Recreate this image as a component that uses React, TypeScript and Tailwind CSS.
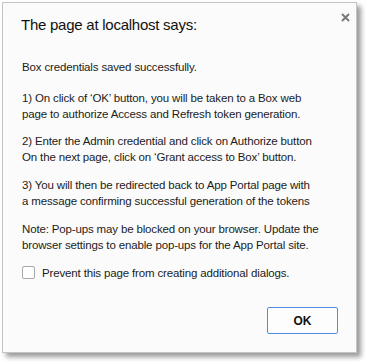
export default function App() {
  const body = "text-[11.5px] leading-[16.5px] tracking-[-0.15px] text-[#1c1c1c] whitespace-nowrap"

  return (
    <div className="w-[366px] h-[362px] bg-white pt-[2px] pl-[2px] font-['Liberation_Sans',Arial,sans-serif]">
      <div className="relative w-[355px] h-[351px] border border-[#c4c4c4] bg-[#fbfbfb] shadow-[4px_4px_5px_rgba(0,0,0,0.4)] flex flex-col px-[18px] pb-[18px]">
        {/* close */}
        <button className="absolute top-[9px] right-[6px] w-[10px] h-[10px] flex items-center justify-center">
          <svg width="9" height="9" viewBox="0 0 9 9">
            <path d="M1 1 L8 8 M8 1 L1 8" stroke="#7a7a7a" strokeWidth="2" />
          </svg>
        </button>

        <h1 className="mt-[12px] text-[15px] leading-[20px] tracking-[-0.25px] text-[#111]">
          The page at localhost says:
        </h1>

        <div className="mt-[24px] pl-[1px]">
          <p className={body}>Box credentials saved successfully.</p>
          <div className={`mt-[14px] ${body}`}>
            <p>1) On click of ‘OK’ button, you will be taken to a Box web</p>
            <p>page to authorize Access and Refresh token generation.</p>
          </div>
          <div className={`mt-[10px] ${body}`}>
            <p>2) Enter the Admin credential and click on Authorize button</p>
            <p>On the next page, click on ‘Grant access to Box’ button.</p>
          </div>
          <div className={`mt-[11px] ${body}`}>
            <p>3) You will then be redirected back to App Portal page with</p>
            <p>a message confirming successful generation of the tokens</p>
          </div>
          <div className={`mt-[11px] ${body}`}>
            <p>Note: Pop-ups may be blocked on your browser. Update the</p>
            <p>browser settings to enable pop-ups for the App Portal site.</p>
          </div>
          <label className={`mt-[11px] flex items-center gap-[7px] ${body}`}>
            <span className="w-[13px] h-[13px] rounded-[2px] border border-[#a9a9a9] bg-white" />
            Prevent this page from creating additional dialogs.
          </label>
        </div>

        <div className="mt-auto flex justify-end">
          <button className="w-[71px] h-[27px] border border-[#4d8fe8] rounded-[2px] bg-[#fdfdfd] text-[12px] font-bold text-[#111]">
            OK
          </button>
        </div>
      </div>
    </div>
  )
}
